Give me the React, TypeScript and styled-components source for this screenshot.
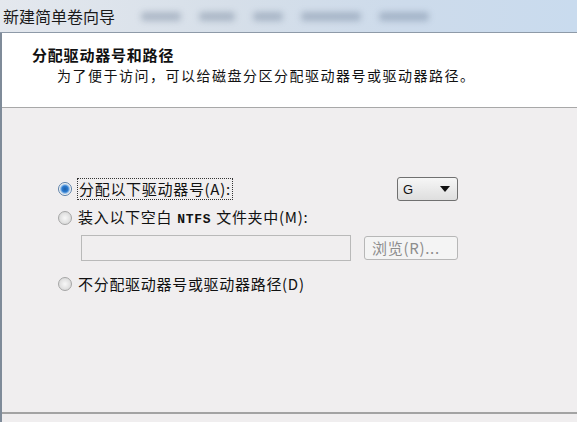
import React from 'react';
import styled, { createGlobalStyle } from 'styled-components';

const GlobalStyle = createGlobalStyle`
  html, body {
    margin: 0;
    padding: 0;
    background: #f0eeef;
  }
  body {
    font-family: "Noto Sans CJK SC", "Noto Sans", sans-serif;
    color: #111;
  }
`;

const Window = styled.div`
  width: 577px;
  height: 422px;
  display: flex;
  flex-direction: column;
  overflow: hidden;
`;

const TitleBar = styled.div`
  height: 32px;
  border-bottom: 1px solid #8e9aa8;
  background: linear-gradient(90deg, #e4e8ee 0%, #d6dfe9 40%, #cddbeb 70%, #c9dbee 100%);
  display: flex;
  align-items: center;
  gap: 18px;
  padding-left: 3px;
  overflow: hidden;
`;

const TitleText = styled.span`
  font-size: 16px;
  line-height: 20px;
  color: #1a1a1a;
  margin-right: 8px;
`;

const Blur = styled.span<{ $w: number }>`
  width: ${p => p.$w}px;
  height: 9px;
  border-radius: 4px;
  background: rgba(70, 90, 120, 0.3);
  filter: blur(3px);
`;

const Frame = styled.div`
  flex: 1;
  display: flex;
  flex-direction: column;
  border-left: 2px solid #7f8b99;
`;

const Header = styled.div`
  height: 75px;
  background: #fff;
  border-bottom: 1px solid #a8a8a8;
  padding: 12px 0 0 30px;
  box-sizing: border-box;
`;

const HeaderTitle = styled.div`
  font-size: 15px;
  font-weight: bold;
  line-height: 20px;
  letter-spacing: 0.8px;
`;

const HeaderSub = styled.div`
  font-size: 14px;
  line-height: 20px;
  padding-left: 25px;
  letter-spacing: 1.5px;
`;

const Body = styled.div`
  flex: 1;
  display: flex;
  flex-direction: column;
  padding: 69px 0 0 56px;
`;

const Footer = styled.div`
  height: 8px;
  border-top: 2px solid #a3a3a3;
`;

const Row = styled.div<{ $mt: number }>`
  height: 24px;
  width: 400px;
  margin-top: ${p => p.$mt}px;
  display: flex;
  align-items: center;
  justify-content: space-between;
`;

const RadioLabel = styled.label`
  display: flex;
  align-items: center;
  gap: 6px;
  font-size: 15px;
  line-height: 20px;
  letter-spacing: 0.7px;
`;

const Radio = styled.span<{ $on?: boolean }>`
  width: 12px;
  height: 12px;
  border-radius: 50%;
  border: 1px solid ${p => (p.$on ? '#5a7fa8' : '#a6a6a6')};
  background: ${p =>
    p.$on
      ? 'radial-gradient(circle, #1d5fa8 0, #2b7bd0 3px, #9ec4ea 4.5px, #f4f4f4 5.5px)'
      : 'radial-gradient(circle, #f8f8f8 0, #dcdcdc 6px)'};
  flex-shrink: 0;
`;

const Focus = styled.span`
  outline: 1px dotted #333;
  outline-offset: 0;
  padding: 0 1px;
`;

const Mono = styled.span`
  font-family: "Liberation Mono", monospace;
  font-size: 13px;
  font-weight: bold;
  margin: 0 5px;
`;

const Select = styled.div`
  width: 61px;
  height: 24px;
  box-sizing: border-box;
  border: 1px solid #707070;
  border-radius: 3px;
  background: linear-gradient(#f6f6f6, #dedede);
  display: flex;
  align-items: center;
  justify-content: space-between;
  padding: 0 7px 0 5px;
  font-family: "Liberation Sans", sans-serif;
  font-size: 13px;
`;

const Arrow = styled.span`
  width: 0;
  height: 0;
  border-left: 5px solid transparent;
  border-right: 5px solid transparent;
  border-top: 6px solid #111;
`;

const FolderRow = styled.div`
  margin: 5px 0 0 23px;
  width: 377px;
  height: 26px;
  display: flex;
  align-items: center;
  justify-content: space-between;
`;

const TextBox = styled.div`
  width: 270px;
  height: 26px;
  box-sizing: border-box;
  border: 1px solid #b9b9b9;
  background: #f0eeef;
`;

const BrowseButton = styled.div`
  width: 94px;
  height: 24px;
  box-sizing: border-box;
  border: 1px solid #b7b7b7;
  border-radius: 3px;
  background: #f4f4f4;
  color: #8d8d8d;
  font-size: 15px;
  line-height: 22px;
  padding-left: 7px;
  letter-spacing: 0.7px;
`;

export default function App() {
  return (
    <Window>
      <GlobalStyle />
      <TitleBar>
        <TitleText>新建简单卷向导</TitleText>
        <Blur $w={40} />
        <Blur $w={36} />
        <Blur $w={30} />
        <Blur $w={60} />
        <Blur $w={50} />
      </TitleBar>
      <Frame>
        <Header>
          <HeaderTitle>分配驱动器号和路径</HeaderTitle>
          <HeaderSub>为了便于访问，可以给磁盘分区分配驱动器号或驱动器路径。</HeaderSub>
        </Header>
        <Body>
          <Row $mt={0}>
            <RadioLabel>
              <Radio $on />
              <Focus>分配以下驱动器号(A):</Focus>
            </RadioLabel>
            <Select>
              G
              <Arrow />
            </Select>
          </Row>
          <Row $mt={5}>
            <RadioLabel>
              <Radio />
              <span>
                装入以下空白<Mono>NTFS</Mono>文件夹中(M):
              </span>
            </RadioLabel>
          </Row>
          <FolderRow>
            <TextBox />
            <BrowseButton>浏览(R)...</BrowseButton>
          </FolderRow>
          <Row $mt={11}>
            <RadioLabel>
              <Radio />
              <span>不分配驱动器号或驱动器路径(D)</span>
            </RadioLabel>
          </Row>
        </Body>
        <Footer />
      </Frame>
    </Window>
  );
}
